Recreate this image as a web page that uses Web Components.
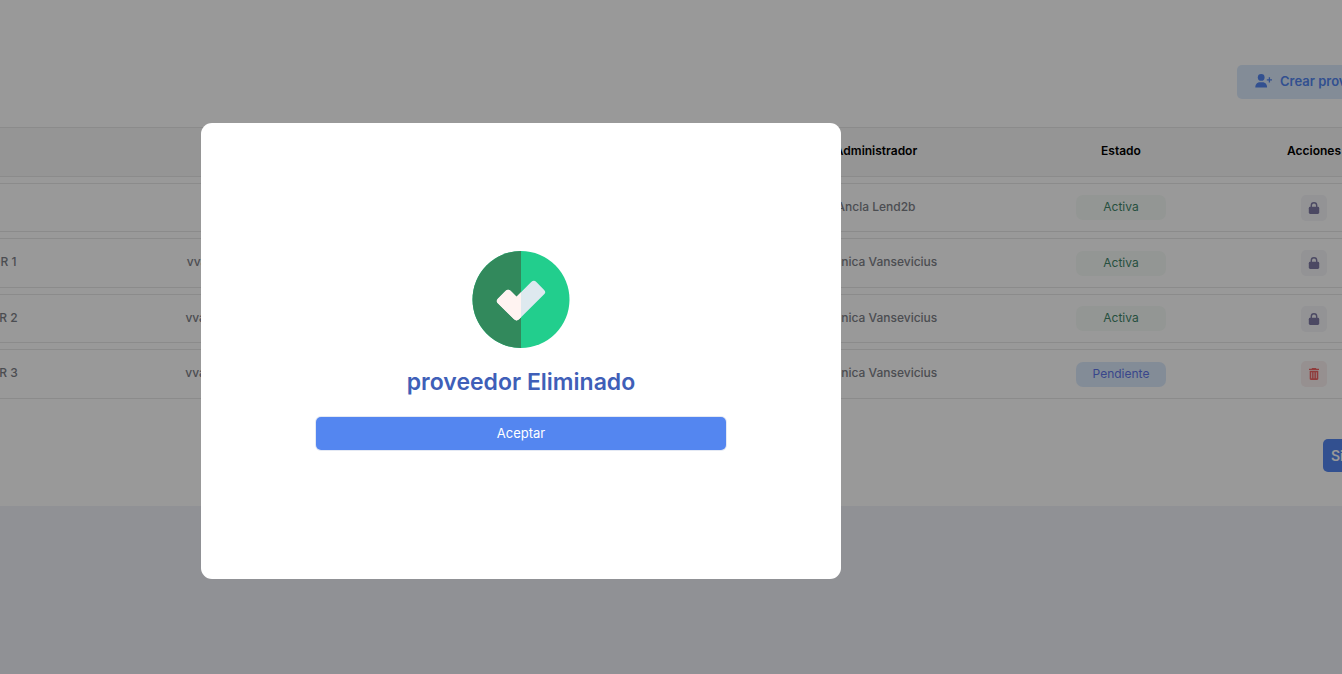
<!DOCTYPE html>
<html lang="es">
<head>
<meta charset="utf-8">
<meta name="viewport" content="width=device-width, initial-scale=1">
<title>Proveedores</title>
<style>
  html, body { height: 100%; }
  body { margin: 0; background: #f0f2f9; font-family: Inter, "Liberation Sans", sans-serif; font-size: 12px; overflow: hidden; }
</style>
</head>
<body>
<provider-page>
  <provider-table></provider-table>
  <success-dialog slot="dialog" heading="proveedor Eliminado"></success-dialog>
</provider-page>

<template id="page-template">
  <style>
    :host { display: block; position: relative; min-height: 100%; overflow: hidden; }
    main { background: #fff; padding: 65px 0 34px; }
    .content { display: flex; flex-direction: column; margin: 0 -75px 0 -124px; }
    .bar { display: flex; justify-content: flex-end; }
    ::slotted(provider-table) { margin: 22px 0 34px; }
  </style>
  <main>
    <div class="content">
      <div class="bar"><action-button variant="soft"><add-user-icon slot="icon"></add-user-icon>Crear proveedor</action-button></div>
      <slot></slot>
      <div class="bar"><action-button variant="next">Siguiente</action-button></div>
    </div>
  </main>
  <slot name="dialog"></slot>
</template>

<template id="button-template">
  <style>
    :host { display: block; }
    button { display: flex; align-items: center; justify-content: center; gap: 7px; width: 100%; height: 33px; padding: 0 18px 1px; border: 0; border-radius: 5px; background: #5486f0; color: #fff; font: 400 13px/16px Inter, sans-serif; cursor: pointer; white-space: nowrap; }
    :host([variant="soft"]) button { width: 180px; height: 34px; padding-bottom: 2px; background: #dbeafc; color: #5486f0; font-weight: 600; justify-content: flex-start; }
    :host([variant="next"]) button { width: 94px; padding: 0 8px; font-size: 14px; font-weight: 600; justify-content: flex-start; }
    :host([variant="accept"]) button { box-shadow: 0 0 0 1px #e4e9f4; }
  </style>
  <button type="button"><slot name="icon"></slot><slot></slot></button>
</template>

<template id="table-template">
  <style>
    :host { display: block; }
    table { width: 100%; table-layout: fixed; border-collapse: separate; border-spacing: 0 6px; }
    th, td { box-sizing: border-box; height: 49px; padding: 0 8px; border: solid #e8e8e8; border-width: 1px 0; text-align: center; vertical-align: middle; line-height: 16px; white-space: nowrap; }
    th { height: 50px; padding-bottom: 2px; background: #f9f9f9; color: #000; font-weight: 600; }
    td { color: #7e8188; font-weight: 500; }
    td.text { padding-bottom: 2px; }
    tbody tr:nth-child(even) td { height: 50px; }
    .name { width: 200px; }
    .mail { width: 396px; }
    .admin { width: 260px; }
    .state { width: 230px; }
    .actions { width: 156px; }
    .edge { width: 25px; }
    status-badge, row-action { margin: 0 auto; }
  </style>
  <table>
    <colgroup><col class="name"><col class="mail"><col><col class="admin"><col class="state"><col class="actions"><col class="edge"></colgroup>
    <thead><tr><th></th><th></th><th></th><th scope="col">Administrador</th><th scope="col">Estado</th><th scope="col">Acciones</th><th></th></tr></thead>
    <tbody></tbody>
  </table>
</template>

<template id="badge-template">
  <style>
    :host { display: block; box-sizing: border-box; width: 90px; height: 25px; border-radius: 7px; background: #f6fbf7; color: #41866a; font-weight: 400; line-height: 24px; text-align: center; }
    :host([kind="pending"]) { background: #dbeafc; color: #6076e8; }
  </style>
  <slot></slot>
</template>

<template id="action-template">
  <style>
    :host { display: block; width: 26px; height: 26px; }
    button { display: grid; place-items: center; width: 26px; height: 26px; padding: 0; border: 0; border-radius: 5px; background: #f5f5f9; color: #7f7ba6; cursor: pointer; }
    :host([kind="trash"]) button { background: #fbf0f0; color: #f16464; }
    svg { display: block; width: 12px; height: 12px; }
    .trash { display: none; }
    :host([kind="trash"]) .trash { display: block; }
    :host([kind="trash"]) .lock { display: none; }
  </style>
  <button type="button">
    <svg class="lock" viewBox="0 0 12 12" aria-hidden="true"><path d="M3.3 5.5V3.4a2.7 2.7 0 0 1 5.4 0v2.1" fill="none" stroke="currentColor" stroke-width="1.4"/><rect x=".8" y="4.8" width="10.4" height="7.2" rx="1.4" fill="currentColor"/></svg>
    <svg class="trash" viewBox="0 0 12 12" aria-hidden="true"><path fill="currentColor" fill-rule="evenodd" d="M4.2 0h3.6l.7.7H11v1.2H1V.7h2.5zM1.7 2.7h8.6v8.1c0 .7-.5 1.2-1.2 1.2H2.9c-.7 0-1.2-.5-1.2-1.2zM3.3 4.2v6h.8v-6zm2.3 0v6h.8v-6zm2.3 0v6h.8v-6z"/></svg>
  </button>
</template>

<template id="add-user-template">
  <style>:host { display: block; } svg { display: block; width: 18px; height: 14px; }</style>
  <svg viewBox="0 0 18 14" aria-hidden="true"><circle cx="6.2" cy="3.4" r="3.4" fill="currentColor"/><path fill="currentColor" d="M.3 13.4c0-3.1 1.8-5.2 4.5-5.2h2.8c2.7 0 4.5 2.1 4.5 5.2z"/><path d="M14.4 3.3v5.2M11.8 5.9H17" stroke="currentColor" stroke-width="1.3"/></svg>
</template>

<template id="dialog-template">
  <style>
    :host { position: absolute; inset: 0; display: flex; align-items: center; justify-content: center; box-sizing: border-box; padding: 28px 300px 0 0; background: rgba(0, 0, 0, .4); }
    section { display: flex; flex-direction: column; align-items: center; box-sizing: border-box; width: 640px; padding: 128px 115px 129px; border-radius: 11px; background: #fff; }
    svg { display: block; width: 98px; height: 97px; }
    h2 { margin: 18px 0 19px; color: #3f5fb8; font-size: 23px; line-height: 32px; font-weight: 600; text-align: center; }
    action-button { align-self: stretch; }
  </style>
  <section role="dialog" aria-modal="true" aria-labelledby="title">
    <svg viewBox="0 0 98 98" aria-hidden="true">
      <circle cx="49" cy="49" r="49" fill="#22ce8d"/>
      <path d="M49 0a49 49 0 0 0 0 98z" fill="#32895c"/>
      <path d="M25.6 48.2 33.6 40.2Q36 38 38.4 40.2L44.5 46.3 59.3 31.4Q62 28.8 64.5 31.4L72.4 39.3Q74.6 41.6 72.4 43.8L47 69Q44.5 71.2 42 69L25.6 52.9Q23.4 50.5 25.6 48.2Z" fill="#dee9ef"/>
      <path d="M25.6 48.2 33.6 40.2Q36 38 38.4 40.2L44.5 46.3 49 41.8V67L47 69Q44.5 71.2 42 69L25.6 52.9Q23.4 50.5 25.6 48.2Z" fill="#fff3f1"/>
    </svg>
    <h2 id="title"></h2>
    <action-button variant="accept">Aceptar</action-button>
  </section>
</template>

<script>
  class TemplateElement extends HTMLElement {
    constructor() {
      super();
      const template = document.getElementById(this.constructor.template);
      this.attachShadow({ mode: "open" }).append(template.content.cloneNode(true));
    }
  }

  customElements.define("action-button", class extends TemplateElement {
    static template = "button-template";
  });
  customElements.define("add-user-icon", class extends TemplateElement {
    static template = "add-user-template";
  });
  customElements.define("status-badge", class extends TemplateElement {
    static template = "badge-template";
  });
  customElements.define("row-action", class extends TemplateElement {
    static template = "action-template";
    connectedCallback() {
      const label = this.getAttribute("kind") === "trash" ? "Eliminar" : "Bloquear";
      this.shadowRoot.querySelector("button").setAttribute("aria-label", label);
    }
  });

  const providers = [
    { name: "", mail: "", admin: "Ancla Lend2b", active: true },
    { name: "PROVEEDOR 1", mail: "vvansevicius+p1@lend2b.com", admin: "Verónica Vansevicius", active: true },
    { name: "PROVEEDOR 2", mail: "vvansevicius+p2@lend2b.com", admin: "Verónica Vansevicius", active: true },
    { name: "PROVEEDOR 3", mail: "vvansevicius+p3@lend2b.com", admin: "Verónica Vansevicius", active: false }
  ];

  customElements.define("provider-table", class extends TemplateElement {
    static template = "table-template";
    connectedCallback() {
      this.shadowRoot.querySelector("tbody").innerHTML = providers.map(p => `
        <tr><td class="text">${p.name}</td><td class="text">${p.mail}</td><td></td><td class="text">${p.admin}</td>
        <td><status-badge kind="${p.active ? "active" : "pending"}">${p.active ? "Activa" : "Pendiente"}</status-badge></td>
        <td><row-action kind="${p.active ? "lock" : "trash"}"></row-action></td><td></td></tr>`).join("");
    }
  });
  customElements.define("success-dialog", class extends TemplateElement {
    static template = "dialog-template";
    connectedCallback() {
      this.shadowRoot.querySelector("h2").textContent = this.getAttribute("heading");
    }
  });
  customElements.define("provider-page", class extends TemplateElement {
    static template = "page-template";
  });
</script>
</body>
</html>
